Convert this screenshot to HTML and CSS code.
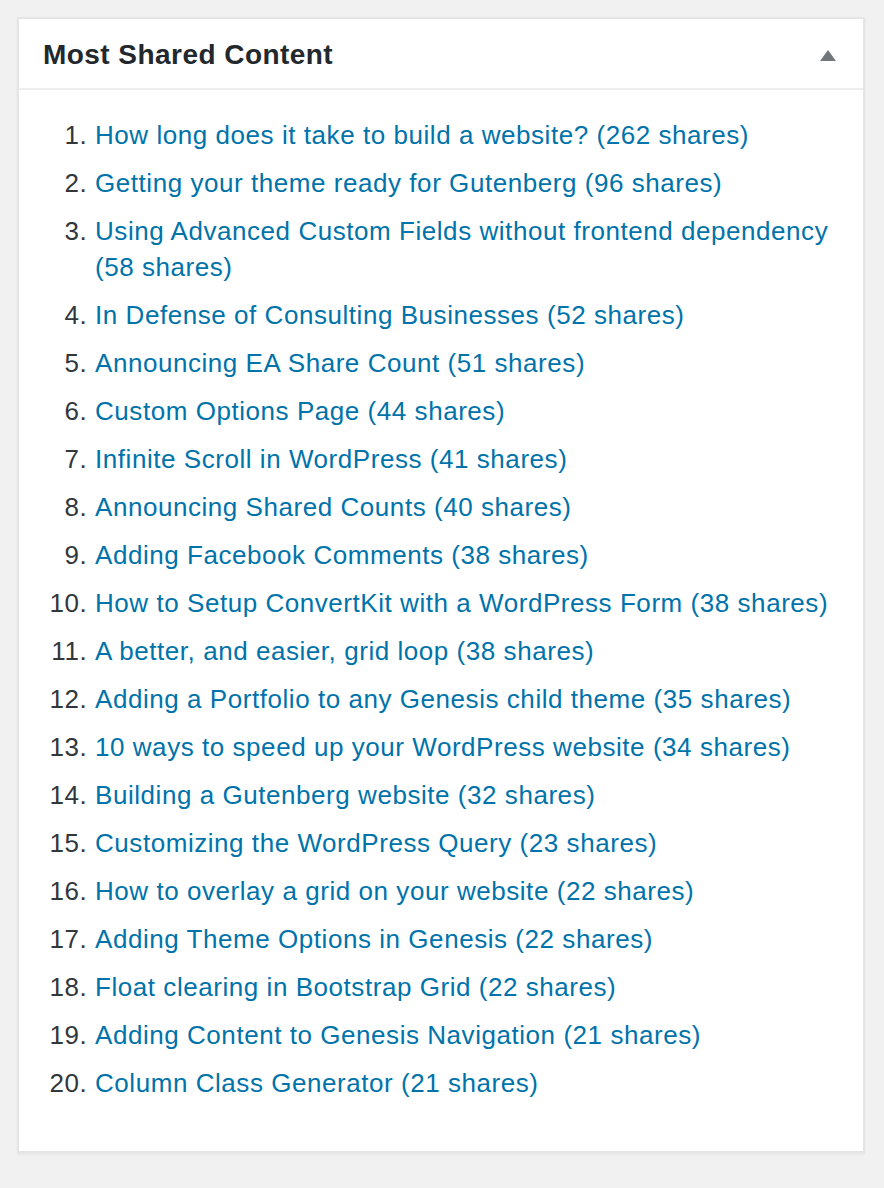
FILE: index.html
```html
<!DOCTYPE html>
<html lang="en">
<head>
    <meta charset="UTF-8">
    <meta name="viewport" content="width=device-width, initial-scale=1.0">
    <title>Most Shared Content</title>
    <link rel="stylesheet" href="styles.css">
</head>
<body>
    <div class="postbox">
        <div class="postbox-header">
            <h2 class="hndle">Most Shared Content</h2>
            <button class="handlediv" type="button" aria-label="Toggle panel">
                <span class="toggle-indicator"></span>
            </button>
        </div>
        <div class="inside">
            <ol class="shared-list">
                <li><a href="#">How long does it take to build a website? (262 shares)</a></li>
                <li><a href="#">Getting your theme ready for Gutenberg (96 shares)</a></li>
                <li><a href="#">Using Advanced Custom Fields without frontend dependency (58 shares)</a></li>
                <li><a href="#">In Defense of Consulting Businesses (52 shares)</a></li>
                <li><a href="#">Announcing EA Share Count (51 shares)</a></li>
                <li><a href="#">Custom Options Page (44 shares)</a></li>
                <li><a href="#">Infinite Scroll in WordPress (41 shares)</a></li>
                <li><a href="#">Announcing Shared Counts (40 shares)</a></li>
                <li><a href="#">Adding Facebook Comments (38 shares)</a></li>
                <li><a href="#">How to Setup ConvertKit with a WordPress Form (38 shares)</a></li>
                <li><a href="#">A better, and easier, grid loop (38 shares)</a></li>
                <li><a href="#">Adding a Portfolio to any Genesis child theme (35 shares)</a></li>
                <li><a href="#">10 ways to speed up your WordPress website (34 shares)</a></li>
                <li><a href="#">Building a Gutenberg website (32 shares)</a></li>
                <li><a href="#">Customizing the WordPress Query (23 shares)</a></li>
                <li><a href="#">How to overlay a grid on your website (22 shares)</a></li>
                <li><a href="#">Adding Theme Options in Genesis (22 shares)</a></li>
                <li><a href="#">Float clearing in Bootstrap Grid (22 shares)</a></li>
                <li><a href="#">Adding Content to Genesis Navigation (21 shares)</a></li>
                <li><a href="#">Column Class Generator (21 shares)</a></li>
            </ol>
        </div>
    </div>
</body>
</html>
```

FILE: styles.css
```css
html, body{
    margin: 0; padding: 0;
}
body{
    background: #f1f1f1;
    font-family: "Liberation Sans", Arial, sans-serif;
    color: #32373c;
    padding: 17px 19px 38px 17px;
}
.postbox{
    background: #fff;
    border: 2px solid #e5e5e5;
    box-shadow: 0 2px 2px rgba(0,0,0,0.04);
}
.postbox-header{
    display: flex;
    align-items: center;
    justify-content: space-between;
    height: 69px;
    border-bottom: 2px solid #eee;
}
.hndle{
    margin: 0;
    padding: 2px 0 0 24px;
    font-size: 28px;
    font-weight: 600;
    letter-spacing: 0.45px;
    color: #23282d;
    line-height: 36px;
}
.handlediv{
    border: 0;
    background: none;
    padding: 0;
    width: 36px;
    height: 36px;
    margin-right: 17px;
    margin-top: 3px;
    display: flex;
    align-items: center;
    justify-content: center;
    cursor: pointer;
}
.toggle-indicator{
    width: 0; height: 0;
    border-left: 8px solid transparent;
    border-right: 8px solid transparent;
    border-bottom: 11px solid #72777c;
}
.inside{
    padding: 27px 24px 38px 24px;
}
.shared-list{
    margin: 0;
    padding: 0 0 0 52px;
    font-size: 26px;
    line-height: 36px;
    letter-spacing: 0.55px;
}
.shared-list li{
    margin-bottom: 12px;
}
.shared-list a{
    color: #0073aa;
    text-decoration: none;
}
```
